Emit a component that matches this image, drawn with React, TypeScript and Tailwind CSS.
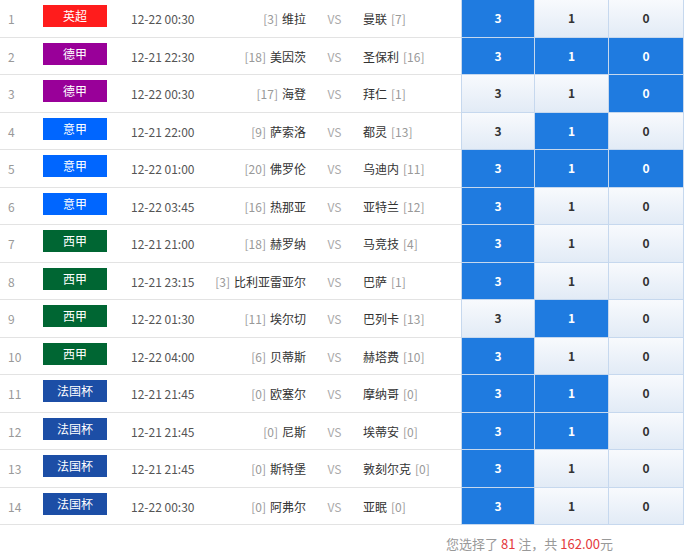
const rows = [
  { n: 1, lg: "英超", c: "bg-[#ff1c1c]", t: "12-22 00:30", hr: "[3]", h: "维拉", a: "曼联", ar: "[7]", s: [1, 0, 0] },
  { n: 2, lg: "德甲", c: "bg-[#990099]", t: "12-21 22:30", hr: "[18]", h: "美因茨", a: "圣保利", ar: "[16]", s: [1, 1, 1] },
  { n: 3, lg: "德甲", c: "bg-[#990099]", t: "12-22 00:30", hr: "[17]", h: "海登", a: "拜仁", ar: "[1]", s: [0, 0, 1] },
  { n: 4, lg: "意甲", c: "bg-[#0066ff]", t: "12-21 22:00", hr: "[9]", h: "萨索洛", a: "都灵", ar: "[13]", s: [0, 1, 0] },
  { n: 5, lg: "意甲", c: "bg-[#0066ff]", t: "12-22 01:00", hr: "[20]", h: "佛罗伦", a: "乌迪内", ar: "[11]", s: [1, 1, 1] },
  { n: 6, lg: "意甲", c: "bg-[#0066ff]", t: "12-22 03:45", hr: "[16]", h: "热那亚", a: "亚特兰", ar: "[12]", s: [1, 0, 0] },
  { n: 7, lg: "西甲", c: "bg-[#006633]", t: "12-21 21:00", hr: "[18]", h: "赫罗纳", a: "马竞技", ar: "[4]", s: [1, 0, 0] },
  { n: 8, lg: "西甲", c: "bg-[#006633]", t: "12-21 23:15", hr: "[3]", h: "比利亚雷亚尔", a: "巴萨", ar: "[1]", s: [1, 0, 0] },
  { n: 9, lg: "西甲", c: "bg-[#006633]", t: "12-22 01:30", hr: "[11]", h: "埃尔切", a: "巴列卡", ar: "[13]", s: [0, 1, 0] },
  { n: 10, lg: "西甲", c: "bg-[#006633]", t: "12-22 04:00", hr: "[6]", h: "贝蒂斯", a: "赫塔费", ar: "[10]", s: [1, 0, 0] },
  { n: 11, lg: "法国杯", c: "bg-[#1c4ea6]", t: "12-21 21:45", hr: "[0]", h: "欧塞尔", a: "摩纳哥", ar: "[0]", s: [1, 1, 0] },
  { n: 12, lg: "法国杯", c: "bg-[#1c4ea6]", t: "12-21 21:45", hr: "[0]", h: "尼斯", a: "埃蒂安", ar: "[0]", s: [1, 1, 0] },
  { n: 13, lg: "法国杯", c: "bg-[#1c4ea6]", t: "12-21 21:45", hr: "[0]", h: "斯特堡", a: "敦刻尔克", ar: "[0]", s: [1, 0, 0] },
  { n: 14, lg: "法国杯", c: "bg-[#1c4ea6]", t: "12-22 00:30", hr: "[0]", h: "阿弗尔", a: "亚眠", ar: "[0]", s: [1, 0, 0] },
];

const labels = ["3", "1", "0"];

function OddsCell({ label, on, first }: { label: string; on: boolean; first: boolean }) {
  return (
    <div
      className={
        "flex items-center justify-center h-full text-[12px] font-bold border-r border-b border-[#c6d8ee] " +
        (first ? "w-[74px] border-l " : label === "1" ? "w-[74px] " : "w-[75px] ") +
        (on
          ? "bg-[#1f7be0] text-white"
          : "bg-gradient-to-b from-[#f8fafd] to-[#e2ebf6] text-[#333]")
      }
    >
      {label}
    </div>
  );
}

export default function App() {
  return (
    <div className="w-[690px] h-[556px] bg-white font-['Noto_Sans_CJK_SC',sans-serif] text-[12px] overflow-hidden">
      <div className="flex flex-col">
        {rows.map((r) => (
          <div key={r.n} className="flex h-[37.5px]">
            <div className="flex w-[461px] h-full border-b border-[#e3e3e3]">
              <div className="w-[43px] pl-[8px] pt-[2px] flex items-center text-[#999]">{r.n}</div>
              <div className="w-[64px]">
                <div className={"mt-[5px] h-[22px] flex items-center justify-center text-white " + r.c}>
                  {r.lg}
                </div>
              </div>
              <div className="ml-[24px] w-[80px] pt-[2px] flex items-center text-[#555]">{r.t}</div>
              <div className="w-[95px] pt-[2px] flex items-center justify-end whitespace-nowrap">
                <span className="text-[#999]">{r.hr}</span>
                <span className="ml-[4px] text-[#333]">{r.h}</span>
              </div>
              <div className="w-[57px] pt-[2px] flex items-center justify-center text-[#aaa]">VS</div>
              <div className="flex-1 pt-[2px] flex items-center whitespace-nowrap">
                <span className="text-[#333]">{r.a}</span>
                <span className="ml-[4px] text-[#999]">{r.ar}</span>
              </div>
            </div>
            <div className="flex h-full">
              {labels.map((l, i) => (
                <OddsCell key={l} label={l} on={r.s[i] === 1} first={i === 0} />
              ))}
            </div>
          </div>
        ))}
      </div>
      <div className="flex justify-end pr-[77px] pt-[9px] text-[13px] text-[#999]">
        <span>
          您选择了 <span className="text-[#e4393c]">81</span> 注，共{" "}
          <span className="text-[#e4393c]">162.00</span>元
        </span>
      </div>
    </div>
  );
}
